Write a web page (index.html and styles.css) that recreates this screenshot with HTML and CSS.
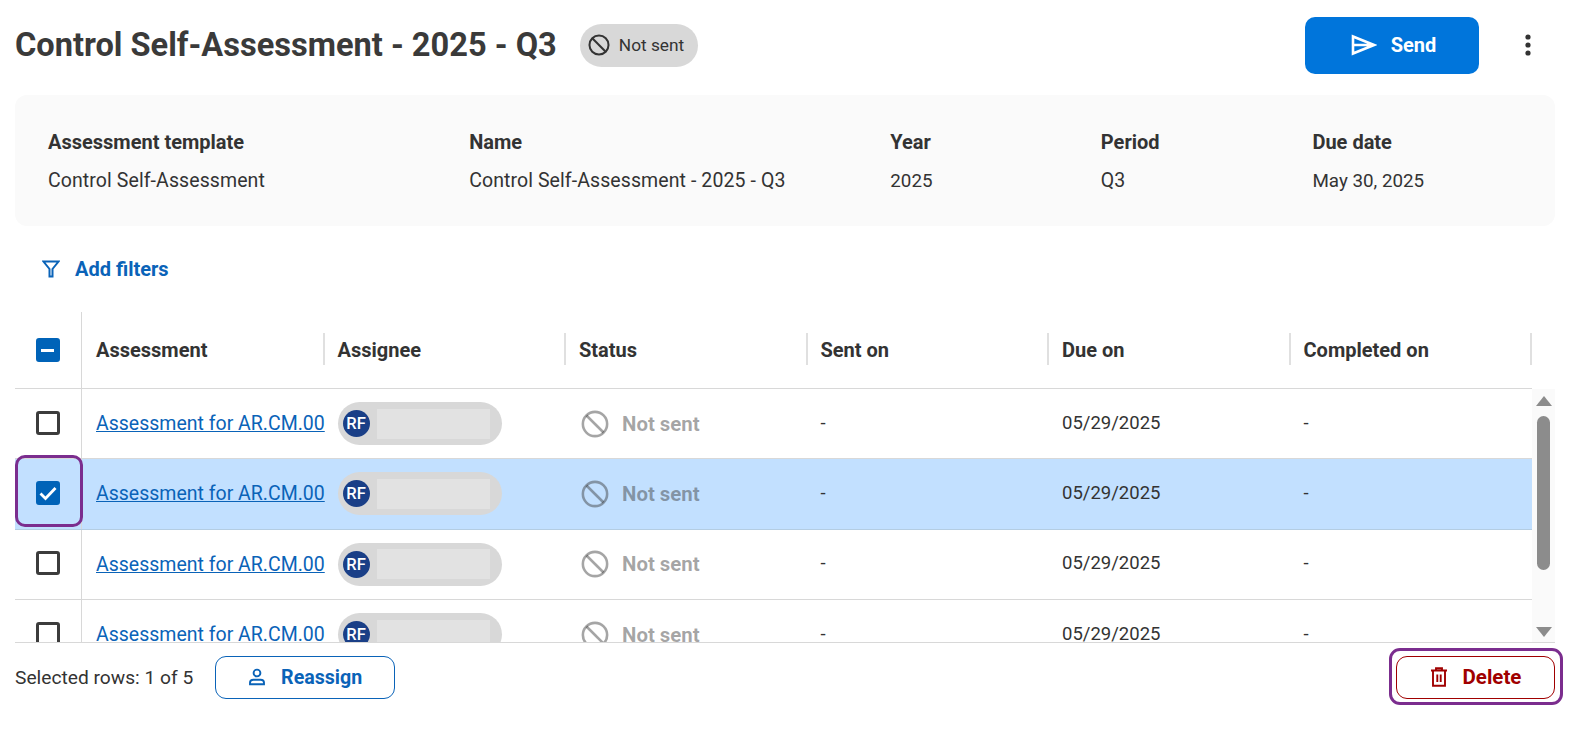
FILE: index.html
```html
<!DOCTYPE html>
<html lang="en">
<head>
<meta charset="utf-8">
<title>Control Self-Assessment - 2025 - Q3</title>
<link rel="stylesheet" href="styles.css">
</head>
<body>
<svg class="defs" width="0" height="0" aria-hidden="true">
  <symbol id="i-ban" viewBox="0 0 24 24"><circle cx="12" cy="12" r="10.4" fill="none" stroke="currentColor" stroke-width="2.2"/><path d="M4.7 4.7l14.6 14.6" fill="none" stroke="currentColor" stroke-width="2.2"/></symbol>
</svg>
<main class="page">
  <header class="top">
    <h1 class="title">Control Self-Assessment - 2025 - Q3</h1>
    <span class="pill"><svg class="pill-icon"><use href="#i-ban"/></svg>Not sent</span>
    <button class="send"><svg class="send-icon" viewBox="0 0 26 22"><path d="M2 2.5L23 11 2 19.5zM2 11h20" fill="none" stroke="currentColor" stroke-width="2.6" stroke-linejoin="miter"/></svg>Send</button>
    <svg class="more" viewBox="0 0 8 24"><circle cx="4" cy="4" r="2.6"/><circle cx="4" cy="12" r="2.6"/><circle cx="4" cy="20" r="2.6"/></svg>
  </header>

  <section class="info">
    <div class="info-col"><div class="info-label">Assessment template</div><div class="info-value">Control Self-Assessment</div></div>
    <div class="info-col"><div class="info-label">Name</div><div class="info-value">Control Self-Assessment - 2025 - Q3</div></div>
    <div class="info-col"><div class="info-label">Year</div><div class="info-value info-num">2025</div></div>
    <div class="info-col"><div class="info-label">Period</div><div class="info-value">Q3</div></div>
    <div class="info-col info-last"><div class="info-label">Due date</div><div class="info-value info-num">May 30, 2025</div></div>
  </section>

  <div class="filters">
    <svg class="filter-icon" viewBox="0 0 18 18"><path d="M1.5 1.5h15L10.5 9v7.5h-3V9z" fill="none" stroke="currentColor" stroke-width="2"/></svg>
    <span>Add filters</span>
  </div>

  <section class="table">
    <div class="thead">
      <div class="cell-check head-check"><span class="box box-on"><span class="dash"></span></span></div>
      <div class="th"><span>Assessment</span></div>
      <div class="th"><span>Assignee</span></div>
      <div class="th"><span>Status</span></div>
      <div class="th"><span>Sent on</span></div>
      <div class="th"><span>Due on</span></div>
      <div class="th"><span>Completed on</span></div>
    </div>
    <div class="tbody-wrap">
      <div class="tbody">
        <div class="row">
          <div class="cell-check"><span class="box"></span></div>
          <div class="td"><a class="link">Assessment for AR.CM.00</a></div>
          <div class="td"><span class="assignee"><span class="avatar">RF</span><span class="redact"></span></span></div>
          <div class="td status"><svg class="status-icon"><use href="#i-ban"/></svg>Not sent</div>
          <div class="td date">-</div><div class="td date">05/29/2025</div><div class="td date">-</div>
        </div>
        <div class="row row-selected">
          <div class="cell-check"><span class="box box-on"><svg class="tick" viewBox="0 0 24 24"><path d="M4.5 12.5l5 5L19.5 7" fill="none" stroke="#fff" stroke-width="2.8"/></svg></span><span class="mark"></span></div>
          <div class="td"><a class="link">Assessment for AR.CM.00</a></div>
          <div class="td"><span class="assignee"><span class="avatar">RF</span><span class="redact"></span></span></div>
          <div class="td status"><svg class="status-icon"><use href="#i-ban"/></svg>Not sent</div>
          <div class="td date">-</div><div class="td date">05/29/2025</div><div class="td date">-</div>
        </div>
        <div class="row">
          <div class="cell-check"><span class="box"></span></div>
          <div class="td"><a class="link">Assessment for AR.CM.00</a></div>
          <div class="td"><span class="assignee"><span class="avatar">RF</span><span class="redact"></span></span></div>
          <div class="td status"><svg class="status-icon"><use href="#i-ban"/></svg>Not sent</div>
          <div class="td date">-</div><div class="td date">05/29/2025</div><div class="td date">-</div>
        </div>
        <div class="row">
          <div class="cell-check"><span class="box"></span></div>
          <div class="td"><a class="link">Assessment for AR.CM.00</a></div>
          <div class="td"><span class="assignee"><span class="avatar">RF</span><span class="redact"></span></span></div>
          <div class="td status"><svg class="status-icon"><use href="#i-ban"/></svg>Not sent</div>
          <div class="td date">-</div><div class="td date">05/29/2025</div><div class="td date">-</div>
        </div>
      </div>
      <div class="scrollbar">
        <span class="arrow-up"></span>
        <span class="thumb"></span>
        <span class="arrow-down"></span>
      </div>
    </div>
  </section>

  <footer class="foot">
    <span class="selected">Selected rows: 1 of 5</span>
    <button class="reassign"><svg class="user-icon" viewBox="0 0 18 18"><circle cx="9" cy="5" r="3.4" fill="none" stroke="currentColor" stroke-width="1.9"/><path d="M2 16.2v-1.4c0-1.8 1.6-3 3.4-3h7.2c1.8 0 3.4 1.2 3.4 3v1.4z" fill="none" stroke="currentColor" stroke-width="1.9"/></svg>Reassign</button>
    <button class="delete"><svg class="trash-icon" viewBox="0 0 18 20"><path d="M1 3.5h16M6 3V1.2h6V3M3 3.5V18.8h12V3.5M7.3 7.5v7.5M10.7 7.5v7.5" fill="none" stroke="currentColor" stroke-width="1.9"/></svg>Delete<span class="mark-delete"></span></button>
  </footer>
</main>
</body>
</html>
```
FILE: styles.css
```css
* { box-sizing: border-box; }
html, body { margin: 0; height: 100%; background: #fff; overflow: hidden; }
body { font-family: "Roboto", "Liberation Sans", sans-serif; font-size: 19.5px; color: #333; }
.defs { position: absolute; }
.page { padding: 0 16px 0 15px; height: 729px; display: flex; flex-direction: column; }

.top { height: 95px; display: flex; align-items: center; padding-bottom: 5px; }
.title { margin: 0; font-size: 32.6px; font-weight: 700; color: #3a3a3a; white-space: nowrap; }
.pill { margin-left: 23px; height: 43px; width: 118px; border-radius: 22px; background: #d8d8d8; display: flex; align-items: center; padding-left: 8px; gap: 9px; font-size: 17.3px; color: #333; }
.pill-icon { width: 22px; height: 22px; }
.send { margin-left: auto; width: 174px; height: 57px; border: 0; border-radius: 10px; background: #0075db; color: #fff; font: 700 20px "Roboto", sans-serif; display: flex; align-items: center; justify-content: center; gap: 14px; padding-left: 9px; }
.send-icon { width: 26px; height: 22px; }
.more { width: 8px; height: 24px; margin: 0 23px 0 45px; fill: #333; }

.info { height: 131px; background: #fafafa; border-radius: 12px; padding: 34px 33px 0; display: grid; grid-template-columns: 2fr 2fr 1fr 1fr 1fr; align-content: start; }
.info-label { font-weight: 700; font-size: 20px; line-height: 26px; }
.info-value { line-height: 26px; margin-top: 13px; letter-spacing: .09px; }
.info-num { font-size: 18.8px; letter-spacing: 0; }
.info-last { padding-left: 1px; }

.filters { height: 86px; display: flex; align-items: center; padding-left: 27px; gap: 15px; color: #0a63b8; font-weight: 700; font-size: 20px; }
.filter-icon { width: 18px; height: 18px; }

.table { width: 100%; }
.thead, .row { display: grid; grid-template-columns: 67px repeat(6, 241.5px); }
.thead { height: 77px; width: 1517px; border-bottom: 1px solid #d8d8d8; }
.cell-check { position: relative; display: flex; align-items: center; justify-content: center; border-right: 1px solid #d8d8d8; padding-right: 1px; }
.th { display: flex; align-items: center; font-weight: 700; font-size: 20px; padding-left: 14px; position: relative; }
.th::after { content: ""; position: absolute; right: -1px; top: 21px; height: 32px; width: 2px; background: #e0e0e0; }

.box { width: 24px; height: 24px; border: 3px solid #3c3c3c; border-radius: 3px; display: flex; align-items: center; justify-content: center; background: #fff; }
.box-on { background: #0063b8; border-color: #0063b8; }
.dash { width: 13px; height: 3px; background: #fff; }
.tick { width: 24px; height: 24px; flex: none; }

.tbody-wrap { display: flex; height: 254px; border-bottom: 1px solid #d8d8d8; }
.tbody { width: 1517px; overflow: hidden; }
.row { height: 70.3px; border-bottom: 1px solid #d8d8d8; }
.row .cell-check { padding-bottom: 2px; }
.row-selected { background: #c2e0ff; border-bottom-color: #b4cde2; }
.td { display: flex; align-items: center; padding-left: 14px; }
.date { font-size: 18.5px; padding-bottom: 2px; }
.link { color: #0a63b8; text-decoration: underline; white-space: nowrap; }
.assignee { width: 164px; height: 43px; border-radius: 22px; background: #d8d8d8; display: flex; align-items: center; padding-left: 5px; }
.avatar { width: 27px; height: 27px; border-radius: 50%; background: #1a3f87; color: #fff; font-size: 16.5px; font-weight: 500; display: flex; align-items: center; justify-content: center; }
.redact { width: 113px; height: 30px; background: #e2e2e2; margin-left: 7px; }
.status { font-weight: 700; font-size: 20.4px; gap: 13px; padding-left: 16px; color: rgba(51, 51, 51, .44); }
.status-icon { width: 28px; height: 28px; }

.scrollbar { width: 23px; background: #fafafa; display: flex; flex-direction: column; align-items: center; padding-top: 7px; }
.arrow-up, .arrow-down { width: 0; height: 0; border-left: 8px solid transparent; border-right: 8px solid transparent; }
.arrow-up { border-bottom: 10px solid #8c8c8c; }
.arrow-down { border-top: 10px solid #8c8c8c; margin-top: 57px; }
.thumb { width: 13px; height: 154px; border-radius: 7px; background: #8c8c8c; margin-top: 10px; }

.mark { position: absolute; left: 0; top: -4px; width: 68px; height: 72px; border: 3px solid #7b2d8e; border-radius: 10px; }
.foot { height: 55px; display: flex; align-items: center; padding-top: 13px; }
.selected { margin-right: 22px; font-size: 19.2px; }
.reassign, .delete { height: 43px; border-radius: 11px; background: #fff; display: flex; align-items: center; justify-content: center; font: 700 19.6px "Roboto", sans-serif; }
.reassign { width: 180px; border: 1.5px solid #0a63b8; color: #0a63b8; gap: 15px; }
.user-icon { width: 18px; height: 18px; }
.delete { position: relative; margin-left: auto; width: 159px; border: 1.5px solid #a00000; color: #a00000; gap: 15px; font-size: 20.5px; }
.trash-icon { width: 18px; height: 20px; }
.mark-delete { position: absolute; left: -8px; top: -9px; width: 174px; height: 57px; border: 3px solid #7b2d8e; border-radius: 11px; }
```
